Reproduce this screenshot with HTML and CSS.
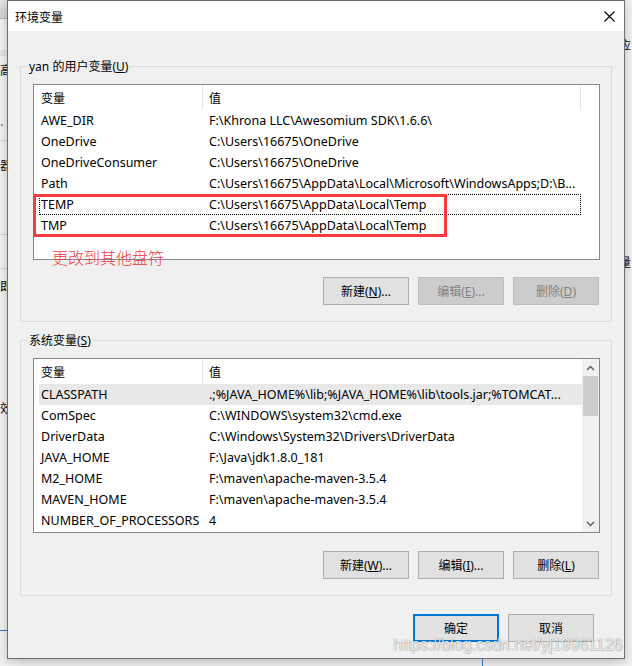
FILE: index.html
```html
<!DOCTYPE html>
<html lang="zh-CN">
<head>
<meta charset="utf-8">
<title>环境变量</title>
<link rel="stylesheet" href="styles.css">
</head>
<body>
<div class="desk">
  <div class="bgl">
    <div class="bgl-top"></div>
    <div class="bgl-line l50"></div>
    <div class="bgl-line l140"></div>
    <div class="bgl-line l234"></div>
    <div class="bgl-line l268"></div>
    <span class="frag f70">高</span>
    <span class="frag blue f125">.</span>
    <span class="frag f165">器</span>
    <span class="frag f286">即</span>
    <span class="frag f408">效</span>
    <div class="bgl-blue"></div>
  </div>
  <div class="bgr">
    <span class="fragr r45">应</span>
    <span class="fragr r262">量</span>
  </div>
  <div class="bgb-blue"></div>

  <div class="dialog">
    <div class="titlebar">
      <span class="title">环境变量</span>
      <svg class="close" width="11" height="11" viewBox="0 0 11 11"><path d="M0.5 0.5 L10.5 10.5 M10.5 0.5 L0.5 10.5" stroke="#000" stroke-width="1.1" fill="none"/></svg>
    </div>
    <div class="body">
      <div class="group g1">
        <div class="legend">yan 的用户变量(<u>U</u>)</div>
        <div class="list l1">
          <div class="lhead">
            <div class="hc hc1">变量</div>
            <div class="hc hc2">值</div>
          </div>
          <div class="rows">
            <div class="row"><span>AWE_DIR</span><span>F:\Khrona LLC\Awesomium SDK\1.6.6\</span></div>
            <div class="row"><span>OneDrive</span><span>C:\Users\16675\OneDrive</span></div>
            <div class="row"><span>OneDriveConsumer</span><span>C:\Users\16675\OneDrive</span></div>
            <div class="row"><span>Path</span><span>C:\Users\16675\AppData\Local\Microsoft\WindowsApps;D:\B...</span></div>
            <div class="row focus"><span>TEMP</span><span>C:\Users\16675\AppData\Local\Temp</span></div>
            <div class="row"><span>TMP</span><span>C:\Users\16675\AppData\Local\Temp</span></div>
          </div>
          <div class="annot-box"></div>
        </div>
        <div class="annot-text">更改到其他盘符</div>
        <div class="btns">
          <div class="btn">新建(<u>N</u>)...</div>
          <div class="btn dis">编辑(<u>E</u>)...</div>
          <div class="btn dis">删除(<u>D</u>)</div>
        </div>
      </div>

      <div class="group g2">
        <div class="legend">系统变量(<u>S</u>)</div>
        <div class="list l2">
          <div class="lmain">
            <div class="lhead lhead2">
              <div class="hc hc1">变量</div>
              <div class="hc hc2 nob">值</div>
            </div>
            <div class="rows">
              <div class="row sel"><span>CLASSPATH</span><span>.;%JAVA_HOME%\lib;%JAVA_HOME%\lib\tools.jar;%TOMCAT...</span></div>
              <div class="row"><span>ComSpec</span><span>C:\WINDOWS\system32\cmd.exe</span></div>
              <div class="row"><span>DriverData</span><span>C:\Windows\System32\Drivers\DriverData</span></div>
              <div class="row"><span>JAVA_HOME</span><span>F:\Java\jdk1.8.0_181</span></div>
              <div class="row"><span>M2_HOME</span><span>F:\maven\apache-maven-3.5.4</span></div>
              <div class="row"><span>MAVEN_HOME</span><span>F:\maven\apache-maven-3.5.4</span></div>
              <div class="row"><span>NUMBER_OF_PROCESSORS</span><span>4</span></div>
            </div>
          </div>
          <div class="sb">
            <div class="sb-btn"><svg width="9" height="6" viewBox="0 0 9 6"><polyline points="1,5 4.5,1.5 8,5" fill="none" stroke="#606060" stroke-width="1.5"/></svg></div>
            <div class="sb-thumb"></div>
            <div class="sb-track"></div>
            <div class="sb-btn"><svg width="9" height="6" viewBox="0 0 9 6"><polyline points="1,1 4.5,4.5 8,1" fill="none" stroke="#606060" stroke-width="1.5"/></svg></div>
          </div>
        </div>
        <div class="btns b2">
          <div class="btn">新建(<u>W</u>)...</div>
          <div class="btn">编辑(<u>I</u>)...</div>
          <div class="btn">删除(<u>L</u>)</div>
        </div>
      </div>

      <div class="footer">
        <div class="btn def">确定</div>
        <div class="btn">取消</div>
      </div>
    </div>
  </div>

  <div class="watermark">https://blog.csdn.net/yj19961126</div>
</div>
</body>
</html>
```

FILE: styles.css
```css
html, body {
  margin: 0;
  padding: 0;
}
body {
  width: 632px;
  height: 666px;
  overflow: hidden;
  font-family: "Noto Sans", "Noto Sans CJK SC", sans-serif;
  font-size: 12px;
  color: #000;
}
u { text-decoration: underline; text-underline-offset: 1px; }

.desk {
  position: relative;
  width: 632px;
  height: 666px;
  background: #ececec;
  overflow: hidden;
}

/* background window fragments (partly hidden behind the dialog) */
.bgl {
  position: absolute;
  left: 0;
  top: 0;
  width: 20px;
  height: 666px;
  background: #f0f0f0;
}
.bgl-top {
  height: 18px;
  background: linear-gradient(#e4e4e4, #d2d2d2);
  border-bottom: 1px solid #b9b9b9;
}
.bgl-line {
  position: absolute;
  left: 0;
  width: 20px;
  height: 1px;
  background: #d4d4d4;
}
.l50 { top: 50px; height: 6px; background: #e2e2e2; }
.l140 { top: 140px; }
.l234 { top: 234px; }
.l268 { top: 268px; }
.frag {
  position: absolute;
  left: 0;
  font-family: "Noto Sans CJK SC", sans-serif;
  font-size: 12px;
  line-height: 14px;
}
.frag.blue { color: #2a6fc9; }
.f70 { top: 63px; }
.f125 { top: 114px; }
.f165 { top: 158px; }
.f286 { top: 279px; }
.f408 { top: 401px; }
.bgl-blue {
  position: absolute;
  left: 0;
  top: 630px;
  width: 20px;
  height: 1px;
  background: #2f77c8;
}
.bgr {
  position: absolute;
  left: 612px;
  top: 0;
  width: 20px;
  height: 666px;
  background: #f0f0f0;
}
.fragr {
  position: absolute;
  left: 7px;
  font-family: "Noto Sans CJK SC", sans-serif;
  font-size: 12px;
  line-height: 14px;
}
.r45 { top: 38px; }
.r262 { top: 255px; }
.bgb-blue {
  position: absolute;
  left: 482px;
  top: 652px;
  width: 1px;
  height: 14px;
  background: #2f77c8;
}

/* dialog */
.dialog {
  position: absolute;
  left: 7px;
  top: 0;
  width: 618px;
  height: 659px;
  box-sizing: border-box;
  border: 1px solid #6f6f6f;
  background: #f0f0f0;
  display: flex;
  flex-direction: column;
  box-shadow: 0 2px 9px rgba(0, 0, 0, 0.22);
}
.titlebar {
  flex: none;
  height: 30px;
  background: #fff;
  display: flex;
  align-items: center;
  justify-content: space-between;
  padding: 0 9px 0 7px;
}
.title {
  font-family: "Noto Sans CJK SC", sans-serif;
  font-size: 12px;
}
.close { display: block; }

.body {
  padding: 0 12px;
  display: flex;
  flex-direction: column;
}
.group {
  position: relative;
  border: 1px solid #dcdcdc;
  padding: 0 11px 16px 12px;
  display: flex;
  flex-direction: column;
  margin-top: 35px;
}
.g2 { margin-top: 18px; }
.legend {
  align-self: flex-start;
  margin: -8px 0 0 -6px;
  padding: 0 2px;
  height: 16px;
  line-height: 16px;
  background: #f0f0f0;
  white-space: nowrap;
}

.list {
  position: relative;
  margin-top: 9px;
  height: 176px;
  box-sizing: border-box;
  border: 1px solid #828790;
  background: #fff;
}
.l2 {
  height: 175px;
  display: flex;
}
.lmain {
  flex: 1;
  min-width: 0;
}
.lhead {
  display: grid;
  grid-template-columns: 169px 378px;
  height: 25px;
}
.lhead2 { grid-template-columns: 169px 379px; }
.hc {
  margin-top: 1px;
  height: 24px;
  box-sizing: border-box;
  border-right: 1px solid #e5e5e5;
  display: flex;
  align-items: center;
  padding-left: 7px;
}
.hc2 { padding-left: 6px; }
.hc.nob { border-right: none; }

.rows { margin-left: 5px; }
.row {
  display: grid;
  grid-template-columns: 168px auto;
  width: 542px;
  height: 21px;
  box-sizing: border-box;
  align-items: center;
  white-space: nowrap;
  overflow: hidden;
  font-size: 12.5px;
}
.row span { padding-left: 2px; }
.row.focus {
  outline: 1px dotted #000;
  outline-offset: -1px;
}
.row.sel {
  width: 543px;
  background: #e8e8e8;
}

.sb {
  flex: none;
  width: 17px;
  background: #f0f0f0;
  display: flex;
  flex-direction: column;
}
.sb-btn {
  height: 17px;
  display: flex;
  align-items: center;
  justify-content: center;
}
.sb-btn svg { display: block; }
.sb-thumb {
  height: 40px;
  margin: 0 1px;
  background: #cdcdcd;
}
.sb-track { flex: 1; }

.annot-box {
  position: absolute;
  left: -1px;
  top: 109px;
  width: 414px;
  height: 43px;
  box-sizing: border-box;
  border: 3px solid #fa3b3b;
}
.annot-text {
  position: absolute;
  left: 31px;
  top: 181px;
  font-family: "Noto Sans CJK SC", sans-serif;
  font-size: 16px;
  line-height: 18px;
  color: #f23c3c;
  font-weight: 300;
}

.btns {
  display: flex;
  justify-content: flex-end;
  gap: 9px;
  margin-top: 17px;
  padding-right: 1px;
}
.b2 { margin-top: 18px; }
.btn {
  width: 86px;
  height: 28px;
  box-sizing: border-box;
  border: 1px solid #adadad;
  background: #e1e1e1;
  display: flex;
  align-items: center;
  justify-content: center;
  white-space: nowrap;
}
.btn.dis {
  background: #cccccc;
  border-color: #bfbfbf;
  color: #838383;
}
.btn.def {
  border: 2px solid #0078d7;
}
.footer {
  display: flex;
  justify-content: flex-end;
  gap: 9px;
  margin-top: 18px;
  padding-right: 18px;
}

.watermark {
  position: absolute;
  left: 393px;
  top: 636px;
  font-family: "Liberation Sans", Arial, sans-serif;
  font-size: 16px;
  line-height: 18px;
  color: rgba(255, 255, 255, 0.85);
  text-shadow: 0 0 1px rgba(0, 0, 0, 0.45), 1px 1px 1px rgba(0, 0, 0, 0.15);
  white-space: nowrap;
}
```
